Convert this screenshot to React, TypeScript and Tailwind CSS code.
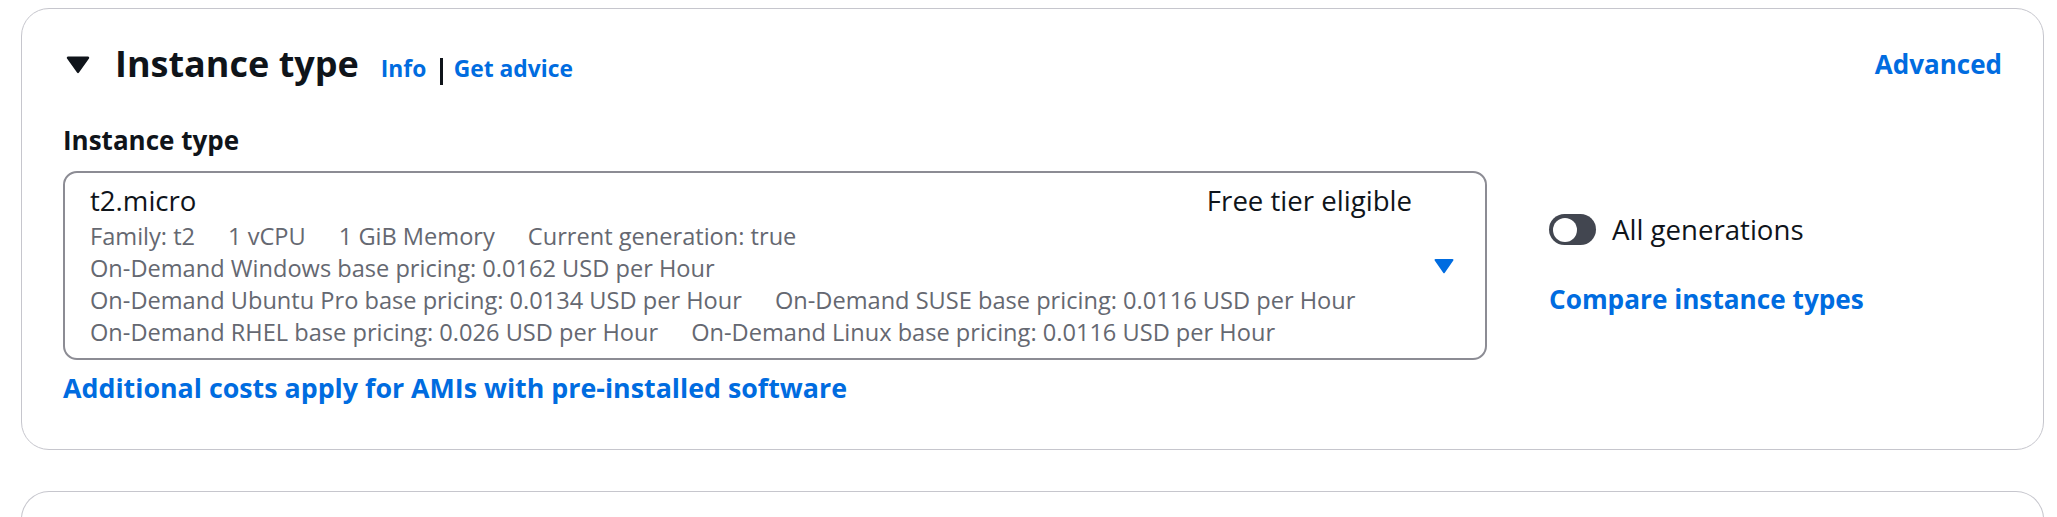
import React from 'react'

const font = { fontFamily: '"Open Sans", "Noto Sans", sans-serif' }

function CaretDown({ className }: { className?: string }) {
  return (
    <svg viewBox="0 0 24 19" className={className} aria-hidden>
      <path d="M2 1.5h20a1.2 1.2 0 0 1 1 1.9L13 17.4a1.2 1.2 0 0 1-2 0L1 3.4a1.2 1.2 0 0 1 1-1.9z" fill="currentColor" />
    </svg>
  )
}

function Toggle() {
  return (
    <span className="relative inline-block w-[47px] h-[31px] rounded-full bg-[#424650] shrink-0">
      <span className="absolute left-[4px] top-[3.5px] w-[24px] h-[24px] rounded-full bg-white" />
    </span>
  )
}

export default function App() {
  return (
    <div className="w-[2057px] h-[517px] bg-white overflow-hidden" style={font}>
      <section className="ml-[21px] mr-[13px] mt-[8px] h-[442px] border border-[#c6c6cd] rounded-[28px] px-[41px] pt-[33px]">
        {/* header */}
        <div className="flex items-baseline h-[44px]">
          <CaretDown className="ml-[3px] w-[24px] h-[19px] text-[#0f141a] self-center" />
          <h2 className="ml-[25px] text-[36px] leading-[44px] font-bold text-[#0f141a]">Instance type</h2>
          <a className="ml-[22px] text-[22.8px] leading-[44px] font-bold text-[#006ce0]">Info</a>
          <span className="ml-[14px] self-end mb-[1px] w-[2.5px] h-[27px] bg-[#0f141a]" />
          <a className="ml-[11px] text-[22.8px] leading-[44px] font-bold text-[#006ce0]">Get advice</a>
          <a className="ml-auto self-center text-[26px] leading-[44px] font-bold text-[#006ce0]">Advanced</a>
        </div>

        <div className="flex mt-[35px]">
          {/* left column */}
          <div className="w-[1424px]">
            <div className="text-[26px] leading-[39px] font-bold text-[#0f141a]">Instance type</div>
            <div className="mt-[11px] h-[189px] border-2 border-[#8c8c94] rounded-[14px] flex items-center pl-[25px] pr-[31px]">
              <div className="flex-1 self-start pt-[8px]">
                <div className="flex justify-between text-[27.6px] leading-[39px] text-[#0f141a]">
                  <span>t2.micro</span>
                  <span>Free tier eligible</span>
                </div>
                <div className="text-[23.6px] leading-[32px] text-[#656871]">
                  <div className="flex gap-x-[33px]">
                    <span>Family: t2</span>
                    <span>1 vCPU</span>
                    <span>1 GiB Memory</span>
                    <span>Current generation: true</span>
                  </div>
                  <div className="flex gap-x-[33px]">
                    <span>On-Demand Windows base pricing: 0.0162 USD per Hour</span>
                  </div>
                  <div className="flex gap-x-[33px]">
                    <span>On-Demand Ubuntu Pro base pricing: 0.0134 USD per Hour</span>
                    <span>On-Demand SUSE base pricing: 0.0116 USD per Hour</span>
                  </div>
                  <div className="flex gap-x-[33px]">
                    <span>On-Demand RHEL base pricing: 0.026 USD per Hour</span>
                    <span>On-Demand Linux base pricing: 0.0116 USD per Hour</span>
                  </div>
                </div>
              </div>
              <svg viewBox="0 0 20 16" className="ml-[22px] w-[20px] h-[16px] text-[#006ce0]" aria-hidden>
                <path d="M1.5 1h17a1 1 0 0 1 .8 1.6l-8.5 12.2a1 1 0 0 1-1.6 0L.7 2.6A1 1 0 0 1 1.5 1z" fill="currentColor" />
              </svg>
            </div>
            <a className="block mt-[8px] text-[26.8px] leading-[39px] font-bold text-[#006ce0]">
              Additional costs apply for AMIs with pre-installed software
            </a>
          </div>

          {/* right column */}
          <div className="ml-[62px] pt-[89px]">
            <div className="flex items-center h-[39px]">
              <Toggle />
              <span className="ml-[16px] text-[27.6px] leading-[39px] text-[#0f141a]">All generations</span>
            </div>
            <a className="block mt-[31px] text-[26.2px] leading-[39px] font-bold text-[#006ce0]">Compare instance types</a>
          </div>
        </div>
      </section>

      <section className="ml-[21px] mr-[13px] mt-[41px] h-[80px] border-t border-x border-[#c6c6cd] rounded-t-[28px]" />
    </div>
  )
}
